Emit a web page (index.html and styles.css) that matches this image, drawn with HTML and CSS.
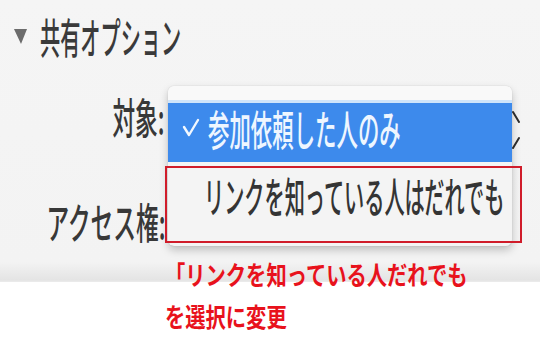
FILE: index.html
```html
<!DOCTYPE html>
<html lang="ja">
<head>
<meta charset="utf-8">
<title>共有オプション</title>
<link rel="stylesheet" href="styles.css">
</head>
<body>

<div class="panel">
	<div class="heading">
		<span class="disclosure"></span>
		<span class="sq">共有オプション</span>
	</div>

	<div class="row row-target">
		<div class="label"><span class="sq sq-label">対象:</span></div>
		<div class="popup">
			<svg class="updown" width="10" height="42" viewBox="0 0 10 42">
				<path d="M1 3 L7 13 M7 29 L1 39" fill="none" stroke="#2e2e2e" stroke-width="2" stroke-linecap="round"/>
			</svg>
		</div>
	</div>

	<div class="row row-access">
		<div class="label"><span class="sq sq-label">アクセス権:</span></div>
		<div class="popup"></div>
	</div>

	<!-- open popup menu lies over the two rows -->
	<div class="menu">
		<div class="menu-top"></div>
		<div class="item selected">
			<svg class="check" width="18" height="20" viewBox="0 0 18 20">
				<path d="M2 9 L7 17 L16 2" fill="none" stroke="#f2f8ff" stroke-width="2.4" stroke-linecap="round" stroke-linejoin="round"/>
			</svg>
			<span class="sq sq-wide">参加依頼した人のみ</span>
		</div>
		<div class="item">
			<span class="sq">リンクを知っている人はだれでも</span>
		</div>
	</div>
	<div class="mark"></div>
</div>

<div class="note">
	<span class="sq-note">「リンクを知っている人だれでも</span>
	<span class="sq-note">を選択に変更</span>
</div>

</body>
</html>
```

FILE: styles.css
```css
body {
	margin: 0;
	background: #fff;
	font-family: "Noto Sans CJK JP", "Noto Sans", sans-serif;
}

.panel {
	position: relative;
	width: 540px;
	height: 282px;
	background: linear-gradient(to bottom, #f5f5f5 0, #f3f3f3 262px, #e4e4e4 280px, #ececec 282px);
	color: #3a3a3a;
	overflow: hidden;
}

/* screenshot text is squeezed sideways */
.sq {
	display: inline-block;
	flex-shrink: 0;
	font-size: 42px;
	line-height: 42px;
	font-weight: 500;
	white-space: nowrap;
	transform: scaleX(0.48);
	transform-origin: left center;
}

.sq-label {
	transform: scaleX(0.54);
	transform-origin: right center;
}

.sq-wide {
	transform: scaleX(0.51);
}

.heading {
	display: flex;
	align-items: center;
	height: 42px;
	padding: 15px 0 0 14px;
}

.disclosure {
	flex-shrink: 0;
	width: 0;
	height: 0;
	margin-right: 13px;
	border-left: 7px solid transparent;
	border-right: 6px solid transparent;
	border-top: 15px solid #6c6c6c;
}

.row {
	display: flex;
	align-items: center;
	height: 42px;
}

.row-target {
	margin-top: 38px;
}

.row-access {
	margin-top: 63px;
}

.label {
	flex-shrink: 0;
	width: 165px;
	display: flex;
	justify-content: flex-end;
	color: #383838;
}

.popup {
	flex-shrink: 0;
	width: 357px;
	display: flex;
	justify-content: flex-end;
}

.updown {
	flex-shrink: 0;
	margin: 28px 0 0 0;
}

.menu {
	position: absolute;
	left: 168px;
	top: 86px;
	width: 344px;
	height: 160px;
	background: #f4f4f4;
	border-radius: 6px;
	box-shadow: 0 4px 9px rgba(0, 0, 0, 0.22), 0 0 1px rgba(0, 0, 0, 0.25);
	overflow: hidden;
}

.menu-top {
	height: 14px;
	background: #f9f9f9;
	border-bottom: 3px solid #cfe5fb;
}

.item {
	display: flex;
	align-items: center;
	height: 42px;
	padding: 12px 0 30px 36px;
	color: #343434;
}

.item.selected {
	height: 42px;
	padding: 4px 0 13px 14px;
	background: #3d8aec;
	color: #eef6ff;
}

.check {
	flex-shrink: 0;
	margin-right: 8px;
}

.mark {
	position: absolute;
	left: 165px;
	top: 166px;
	width: 357px;
	height: 77px;
	box-sizing: border-box;
	border: 2px solid #d01c2a;
}

.note {
	margin-top: -29px;
	padding-left: 165px;
	position: relative;
	color: #e8121c;
}

.sq-note {
	display: block;
	font-size: 26px;
	line-height: 42px;
	font-weight: bold;
	white-space: nowrap;
	transform: scaleX(0.78);
	transform-origin: left center;
}
```
